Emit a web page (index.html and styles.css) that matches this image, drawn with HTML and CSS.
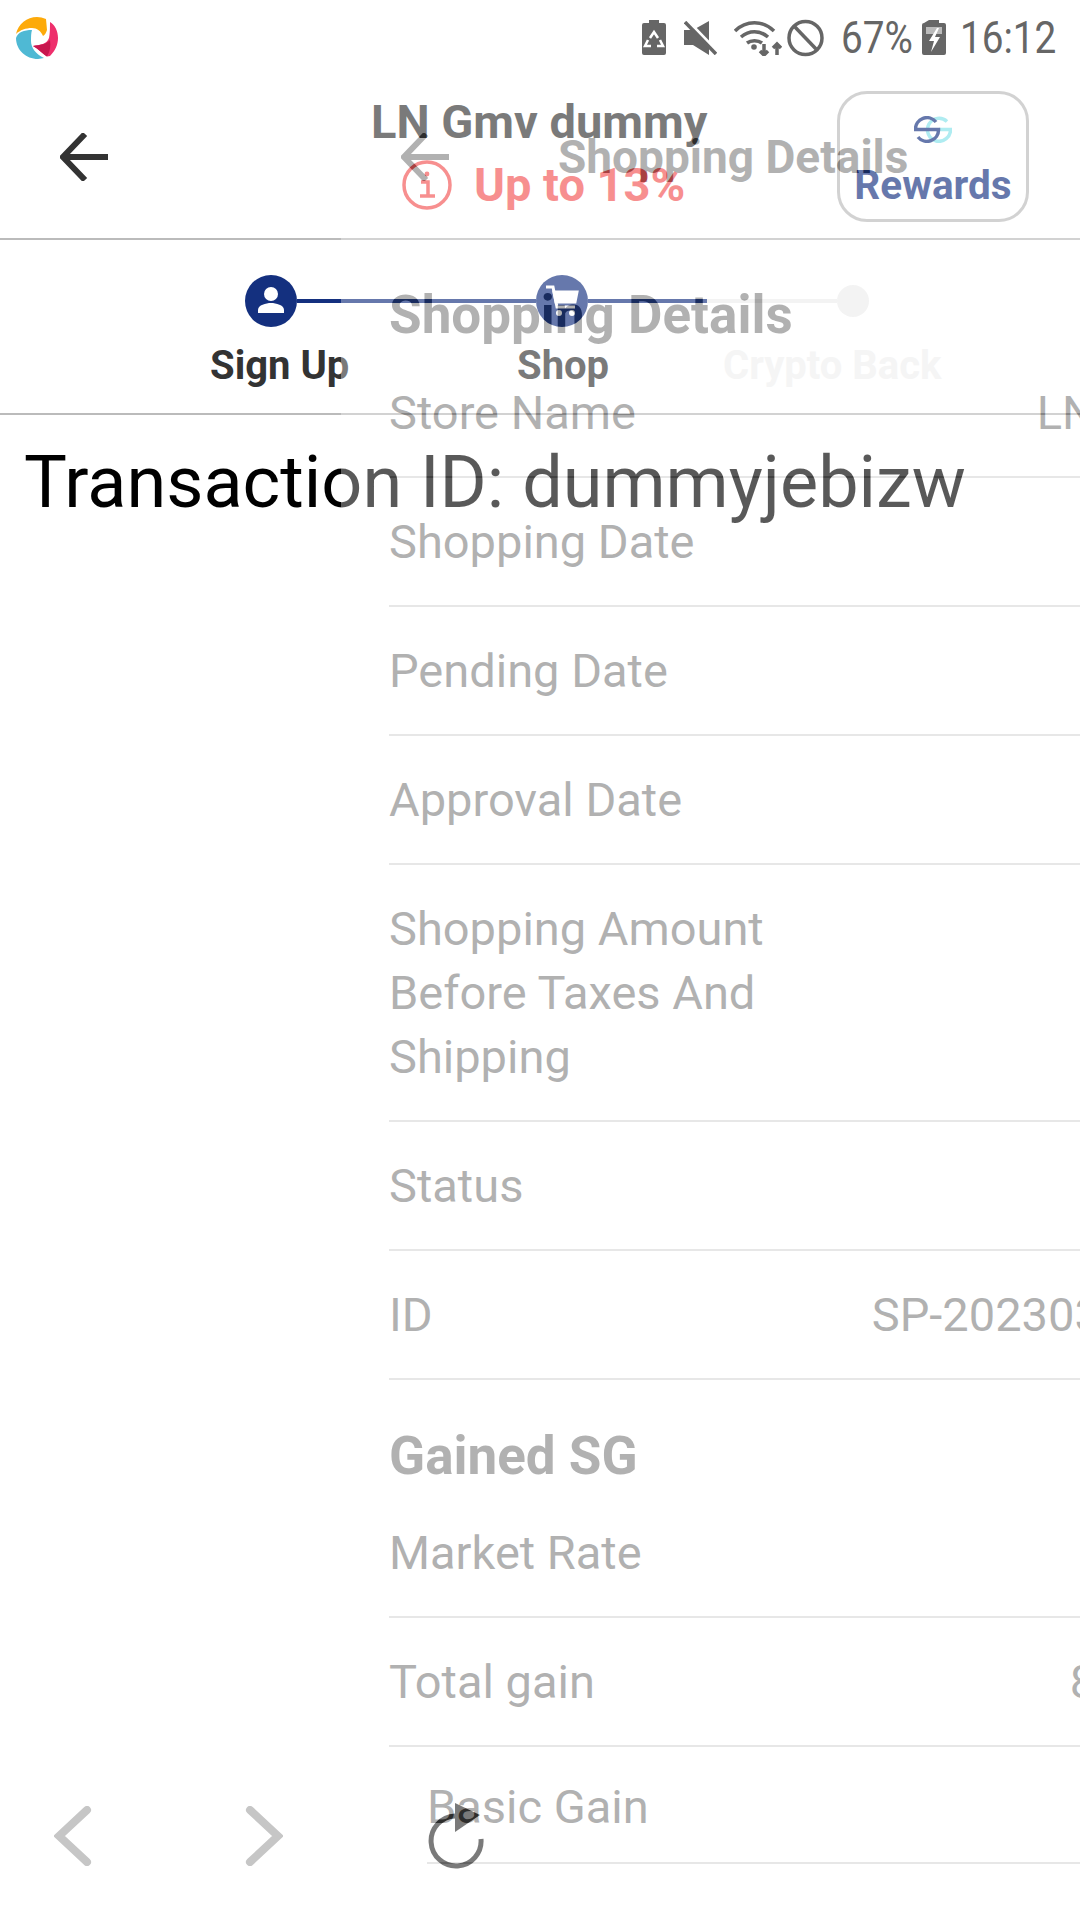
FILE: index.html
```html
<!DOCTYPE html>
<html lang="en">
<head>
    <meta charset="UTF-8">
    <meta name="viewport" content="width=device-width, initial-scale=1.0">
    <title>Transaction details</title>
    <link rel="stylesheet" href="styles.css">
</head>
<body>
    <!-- status bar sits above both pages -->
    <div class="status-bar">
        <svg class="app-logo" viewBox="0 0 42 42" width="42" height="42">
            <path d="M0 17C2 7 11 0 21 0c3 0 6 .7 9 2l1 11c-1 3-2 5-4 6-2-5-6-8-11-8-6 0-12 2-16 6z" fill="#fdaa0a"/>
            <path d="M16 13C8 13 2 15 0 21c0 12 10 21 22 21l6-1c-8-4-13-10-13-17 0-4 0-8 1-11z" fill="#4fb9d4"/>
            <path d="M34 5c5 3 8 9 8 16 0 7-3 13-8 18l-3 .5C26 36 21 31 17 29c7-1 14-2 16-8 1-4 1-11 1-16z" fill="#ee2f6c"/>
            <path d="M17 29c7-1 14-2 17-6 1 6 0 12-3 16.500C26 36 21 31 17 29z" fill="#c8174f"/>
        </svg>
        <div class="status-icons">
            <svg viewBox="0 0 24 35" width="24" height="35">
                <path d="M7 0h10v3h5a2 2 0 0 1 2 2v28a2 2 0 0 1-2 2H2a2 2 0 0 1-2-2V5a2 2 0 0 1 2-2h5z" fill="#666"/>
                <path d="M8 18l4-6 4 6M18 20l3 6h-6M6 20l-3 6h6" fill="none" stroke="#fff" stroke-width="2.500"/>
            </svg>
            <svg class="icon-mute" viewBox="0 0 33 34" width="33" height="34">
                <path d="M0 9h9L25 0v34L9 24H0z" fill="#666"/>
                <path d="M3 -1l31 32" stroke="#fff" stroke-width="3"/>
                <path d="M1 1l31 32" stroke="#666" stroke-width="3.500"/>
            </svg>
            <svg class="icon-wifi" viewBox="0 0 48 36" width="48" height="36" fill="none" stroke="#666" stroke-width="3.500">
                <path d="M1 11c11-11 28-11 39 0M7 17c8-7 19-7 27 0M13 23c4-3 11-3 15 0"/>
                <circle cx="20" cy="27" r="2.800" fill="#666" stroke="none"/>
                <path d="M30 24v11M26 31l4 4 4-4M43 35V24M39 28l4-4 4 4"/>
            </svg>
            <svg class="icon-block" viewBox="0 0 37 38" width="37" height="38" fill="none" stroke="#666" stroke-width="3.500">
                <circle cx="18.500" cy="19" r="16.500"/>
                <path d="M7 7l23 24"/>
            </svg>
            <span class="status-text percent">67%</span>
            <svg class="icon-charge" viewBox="0 0 24 35" width="24" height="35">
                <path d="M7 0h10v3h5a2 2 0 0 1 2 2v28a2 2 0 0 1-2 2H2a2 2 0 0 1-2-2V5a2 2 0 0 1 2-2z" fill="#666"/>
                <path d="M4 7h16v7H4z" fill="#bbb"/>
                <path d="M15 8l-8 13h5l-3 11 9-15h-5l4-9z" fill="#fff"/>
            </svg>
            <span class="status-text clock">16:12</span>
        </div>
    </div>

    <!-- page underneath -->
    <div class="base-page">
        <div class="top-bar">
            <svg class="back-arrow" viewBox="0 0 48 48" width="48" height="48" fill="none" stroke="#333" stroke-width="6">
                <path d="M48 24H5M25 1L3 24l22 23"/>
            </svg>
            <div class="store-info">
                <div class="store-name">LN Gmv dummy</div>
                <div class="store-rate">
                    <svg viewBox="0 0 50 50" width="50" height="50" fill="none" stroke="#f35353" stroke-width="3.500">
                        <circle cx="25" cy="25" r="23"/>
                        <path d="M19 22h7v13M18 36h15"/>
                        <circle cx="25" cy="14" r="2.400" fill="#f35353" stroke="none"/>
                    </svg>
                    <span>Up to 13%</span>
                </div>
            </div>
            <div class="rewards-box">
                <svg viewBox="0 0 38 27" width="38" height="27" fill="none" stroke-width="3.500">
                    <path d="M33 5.500A11.500 11.500 0 1 0 36.500 13.500H25" stroke="#84e2ea"/>
                    <path d="M22 6A11.500 11.500 0 0 0 1.500 13.500H24.500A11.500 11.500 0 0 1 4 21" stroke="#14307f"/>
                </svg>
                <div class="rewards-label">Rewards</div>
            </div>
        </div>

        <div class="stepper">
            <div class="step-track">
                <div class="step-dot done">
                    <svg viewBox="0 0 52 52" width="52" height="52" fill="#fff">
                        <circle cx="26" cy="19" r="7"/>
                        <path d="M13 38v-3c0-5 8-7 13-7s13 2 13 7v3z"/>
                    </svg>
                </div>
                <div class="step-line line-a"></div>
                <div class="step-dot done">
                    <svg viewBox="0 0 52 52" width="52" height="52" fill="none" stroke="#fff" stroke-width="3">
                        <path d="M10 12h7l4 20h18"/>
                        <path d="M18 17h23l-2 10H20z" fill="#fff"/>
                        <circle cx="23" cy="38" r="3" fill="#fff" stroke="none"/>
                        <circle cx="36" cy="38" r="3" fill="#fff" stroke="none"/>
                    </svg>
                </div>
                <div class="step-line line-b"></div>
                <div class="step-line line-c"></div>
                <div class="step-dot todo"></div>
            </div>
            <div class="step-labels">
                <span class="step-label label-signup">Sign Up</span>
                <span class="step-label label-shop">Shop</span>
                <span class="step-label label-back">Crypto Back</span>
            </div>
        </div>

        <div class="transaction-id">Transaction ID: dummyjebizw</div>
    </div>

    <div class="bottom-nav">
        <svg class="nav-prev" viewBox="0 0 38 60" width="38" height="60" fill="none" stroke="#c6c6c6" stroke-width="8" stroke-linecap="round">
            <path d="M33 4L5 30l28 26"/>
        </svg>
        <svg class="nav-next" viewBox="0 0 38 60" width="38" height="60" fill="none" stroke="#c6c6c6" stroke-width="8" stroke-linecap="round">
            <path d="M5 4l28 26L5 56"/>
        </svg>
        <svg class="nav-reload" viewBox="0 0 56 66" width="56" height="66" fill="none" stroke="#333" stroke-width="5">
            <path d="M53 36a25 25 0 1 1-26-23"/>
            <path d="M27 0l25 12-25 17z" fill="#333" stroke="none"/>
        </svg>
    </div>

    <!-- next page sliding in, faded -->
    <div class="next-page">
        <div class="next-bar">
            <svg class="back-arrow" viewBox="0 0 48 48" width="48" height="48" fill="none" stroke="#222" stroke-width="6">
                <path d="M48 24H5M25 1L3 24l22 23"/>
            </svg>
            <div class="next-title">Shopping Details</div>
        </div>
        <div class="details">
            <h2 class="details-title">Shopping Details</h2>
            <div class="detail-row"><span>Store Name</span><span class="detail-value value-store">LN Gmv dummy</span></div>
            <div class="detail-row"><span>Shopping Date</span></div>
            <div class="detail-row"><span>Pending Date</span></div>
            <div class="detail-row"><span>Approval Date</span></div>
            <div class="detail-row"><span class="detail-long">Shopping Amount Before Taxes And Shipping</span></div>
            <div class="detail-row"><span>Status</span></div>
            <div class="detail-row"><span>ID</span><span class="detail-value">SP-2023030916120000</span></div>
            <h3 class="gain-title">Gained SG</h3>
            <div class="detail-row"><span>Market Rate</span></div>
            <div class="detail-row"><span>Total gain</span><span class="detail-value">8.1234567 SG</span></div>
            <div class="detail-row sub-row"><span>Basic Gain</span></div>
        </div>
    </div>
</body>
</html>
```

FILE: styles.css
```css
html, body {
    margin: 0;
    padding: 0;
    height: 1920px;
    overflow: hidden;
    background-color: #fff;
    font-family: Roboto, sans-serif;
}
.status-bar {
    position: relative;
    z-index: 2;
    height: 75px;
    display: flex;
    align-items: center;
    justify-content: space-between;
    padding: 0 23px 0 16px;
}
.app-logo {
    display: block;
}
.status-icons {
    display: flex;
    align-items: center;
}
.icon-mute {
    margin-left: 18px;
}
.icon-wifi {
    margin-left: 17px;
}
.icon-block {
    margin-left: 5px;
}
.icon-charge {
    margin-left: 13px;
}
.status-text {
    display: inline-block;
    font-size: 45px;
    line-height: 50px;
    color: #666;
    white-space: nowrap;
    transform: scaleX(0.86);
    transform-origin: left center;
}
.percent {
    width: 68px;
    margin-left: 17px;
}
.clock {
    width: 97px;
    margin-left: 14px;
}
.top-bar {
    height: 163px;
    display: flex;
    align-items: center;
    padding: 0 51px 0 60px;
    border-bottom: 2px solid #bbb;
}
.back-arrow {
    flex: none;
}
.store-info {
    flex: none;
    margin-left: 263px;
    padding-bottom: 5px;
}
.store-name {
    font-size: 47px;
    font-weight: 700;
    line-height: 52px;
    color: #333;
    margin-bottom: 9px;
}
.store-rate {
    display: flex;
    align-items: center;
    gap: 22px;
    margin-left: 31px;
    font-size: 47px;
    font-weight: 700;
    color: #f35353;
}
.rewards-box {
    box-sizing: border-box;
    width: 192px;
    height: 131px;
    margin-left: auto;
    border: 3px solid #bbb;
    border-radius: 30px;
    text-align: center;
    padding-top: 22px;
}
.rewards-box svg {
    display: block;
    margin: 0 auto;
}
.rewards-label {
    font-size: 40.500px;
    font-weight: 700;
    line-height: 44px;
    color: #14307f;
    margin-top: 20px;
}
.stepper {
    height: 173px;
    border-bottom: 2px solid #bbb;
}
.step-track {
    display: flex;
    align-items: center;
    padding: 35px 0 0 245px;
}
.step-dot {
    flex: none;
    width: 52px;
    height: 52px;
    border-radius: 50%;
}
.step-dot svg {
    display: block;
}
.step-dot.done {
    background-color: #14307f;
}
.step-dot.todo {
    width: 32px;
    height: 32px;
    background-color: #eee;
}
.step-line {
    height: 4px;
}
.line-a {
    width: 239px;
    background-color: #14307f;
}
.line-b {
    width: 119px;
    background-color: #14307f;
}
.line-c {
    width: 130px;
    background-color: #eee;
}
.step-labels {
    display: flex;
    padding: 16px 0 0 210px;
    font-size: 40px;
    font-weight: 700;
    line-height: 46px;
}
.label-signup {
    color: #333;
    width: 307px;
}
.label-shop {
    color: #333;
    width: 206px;
}
.label-back {
    color: #f0f0f0;
}
.transaction-id {
    padding: 28px 0 0 24px;
    font-size: 72px;
    line-height: 80px;
    color: #000;
    white-space: nowrap;
}
.bottom-nav {
    position: absolute;
    left: 0;
    top: 1803px;
    width: 1080px;
    height: 70px;
    display: flex;
    align-items: flex-start;
    padding-left: 54px;
}
.nav-prev, .nav-next {
    margin-top: 3px;
}
.nav-next {
    margin-left: 153px;
}
.nav-reload {
    margin-left: 145px;
}
.next-page {
    position: absolute;
    left: 341px;
    top: 0;
    width: 1080px;
    height: 1920px;
    background-color: #fff;
    opacity: 0.35;
    color: #222;
}
.next-bar {
    height: 163px;
    margin-top: 75px;
    display: flex;
    align-items: center;
    padding-left: 60px;
}
.next-title {
    margin-left: 109px;
    font-size: 46px;
    font-weight: 700;
}
.details {
    padding: 45px 56px 0 48px;
}
.details-title {
    margin: 0 0 2px;
    font-size: 53px;
    font-weight: 700;
    line-height: 64px;
}
.detail-row {
    display: flex;
    justify-content: space-between;
    padding: 32px 0 31px;
    border-bottom: 2px solid #bbb;
    font-size: 47px;
    line-height: 64px;
    white-space: nowrap;
}
.value-store {
    margin-right: -7px;
}
.detail-long {
    white-space: normal;
    width: 440px;
}
.gain-title {
    margin: 0;
    padding: 46px 0 0;
    height: 63px;
    font-size: 53px;
    font-weight: 700;
    line-height: 60px;
}
.sub-row {
    margin-left: 38px;
    padding: 28px 0 23px;
}
```
